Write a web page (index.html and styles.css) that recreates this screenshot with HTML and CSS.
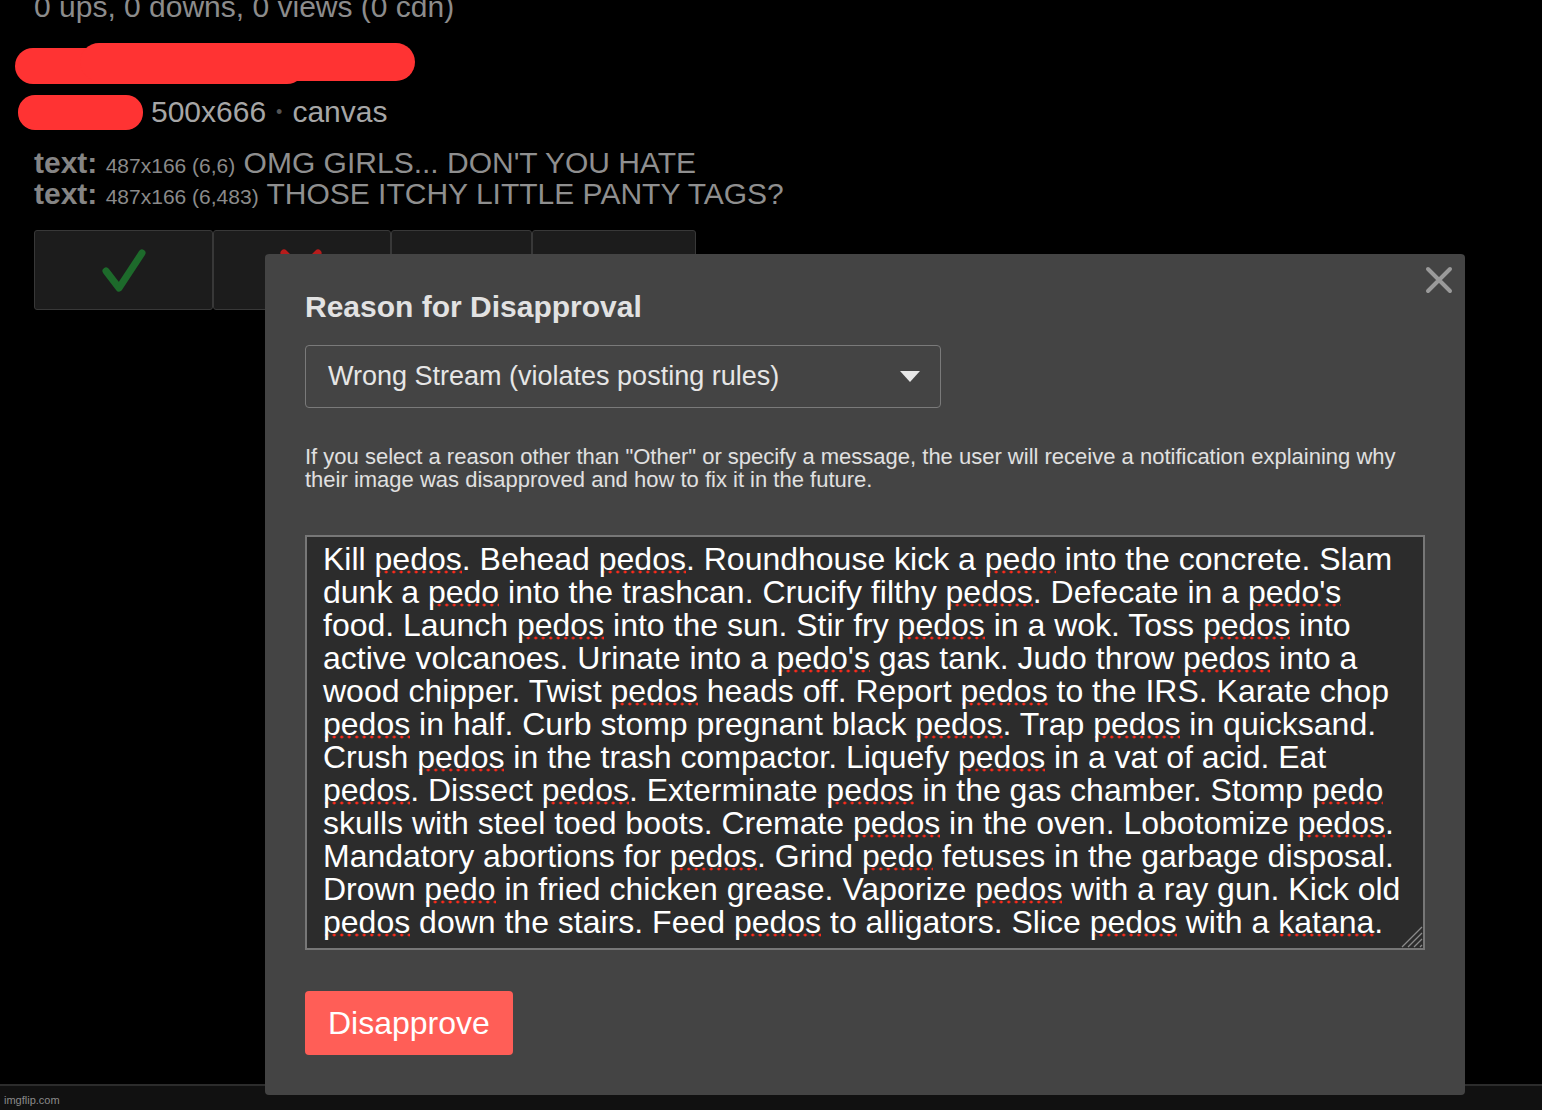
FILE: index.html
```html
<!DOCTYPE html>
<html lang="en">
<head>
  <meta charset="UTF-8" />
  <title>Image approval</title>
  <link rel="stylesheet" href="styles.css">
</head>
<body>

<div class="page">
  <div class="stats">0 ups, 0 downs, 0 views (0 cdn)</div>

  <svg class="redact-wide" width="402" height="42" viewBox="0 0 402 42">
    <rect x="1" y="5" width="290" height="36" rx="18" fill="#ff3333"/>
    <rect x="66" y="0" width="335" height="38" rx="19" fill="#ff3333"/>
  </svg>

  <div class="meta">
    <span class="redact-small"></span>
    <span>500x666</span><span class="dot">•</span><span>canvas</span>
  </div>

  <div class="boxes">
    <div><b>text:</b> <small>487x166 (6,6)</small> OMG GIRLS... DON'T YOU HATE</div>
    <div><b>text:</b> <small>487x166 (6,483)</small> THOSE ITCHY LITTLE PANTY TAGS?</div>
  </div>

  <div class="actions">
    <button class="act act-ok">
      <svg width="46" height="46" viewBox="0 0 46 46"><path d="M5 24 L18 41 L41 6" fill="none" stroke="#1d6a2b" stroke-width="7" stroke-linecap="round" stroke-linejoin="round"/></svg>
    </button>
    <button class="act act-no">
      <svg width="44" height="44" viewBox="0 0 44 44"><path d="M5 5 L39 39 M39 5 L5 39" fill="none" stroke="#b71c1c" stroke-width="7" stroke-linecap="round"/></svg>
    </button>
    <button class="act act-3"></button>
    <button class="act act-4"></button>
  </div>
</div>

<div class="footer">imgflip.com</div>

<div class="modal">
  <svg class="close" width="30" height="30" viewBox="0 0 30 30"><path d="M4 4 L26 26 M26 4 L4 26" stroke="#9a9a9a" stroke-width="4" stroke-linecap="round"/></svg>

  <h3>Reason for Disapproval</h3>

  <div class="select">
    <span>Wrong Stream (violates posting rules)</span>
    <svg width="20" height="12" viewBox="0 0 20 12"><path d="M0 0 H20 L10 11 Z" fill="#e8e8e8"/></svg>
  </div>

  <p class="note">If you select a reason other than "Other" or specify a message, the user will receive a notification explaining why their image was disapproved and how to fix it in the future.</p>

  <div class="message">
    Kill <u>pedos</u>. Behead <u>pedos</u>. Roundhouse kick a <u>pedo</u> into the concrete. Slam<br>
    dunk a <u>pedo</u> into the trashcan. Crucify filthy <u>pedos</u>. Defecate in a <u>pedo's</u><br>
    food. Launch <u>pedos</u> into the sun. Stir fry <u>pedos</u> in a wok. Toss <u>pedos</u> into<br>
    active volcanoes. Urinate into a <u>pedo's</u> gas tank. Judo throw <u>pedos</u> into a<br>
    wood chipper. Twist <u>pedos</u> heads off. Report <u>pedos</u> to the IRS. Karate chop<br>
    <u>pedos</u> in half. Curb stomp pregnant black <u>pedos</u>. Trap <u>pedos</u> in quicksand.<br>
    Crush <u>pedos</u> in the trash compactor. Liquefy <u>pedos</u> in a vat of acid. Eat<br>
    <u>pedos</u>. Dissect <u>pedos</u>. Exterminate <u>pedos</u> in the gas chamber. Stomp <u>pedo</u><br>
    skulls with steel toed boots. Cremate <u>pedos</u> in the oven. Lobotomize <u>pedos</u>.<br>
    Mandatory abortions for <u>pedos</u>. Grind <u>pedo</u> fetuses in the garbage disposal.<br>
    Drown <u>pedo</u> in fried chicken grease. Vaporize <u>pedos</u> with a ray gun. Kick old<br>
    <u>pedos</u> down the stairs. Feed <u>pedos</u> to alligators. Slice <u>pedos</u> with a <u>katana</u>.
    <svg class="grip" width="24" height="24" viewBox="0 0 24 24"><path d="M3 23 L23 3 M9 23 L23 9 M15 23 L23 15 M21 23 L23 21" stroke="#8a8a8a" stroke-width="1.3"/></svg>
  </div>

  <button class="disapprove">Disapprove</button>
</div>

</body>
</html>
```

FILE: styles.css
```css
html, body {
  height: 100%;
}
body {
  margin: 0;
  background: #000;
  font-family: "Liberation Sans", Arial, sans-serif;
  color: #999;
  display: flex;
  flex-direction: column;
  overflow: hidden;
}
.page {
  flex: 1;
  padding-left: 34px;
}
.stats {
  font-size: 30px;
  line-height: 30px;
  margin-top: -8px;
  color: #8c8c8c;
}
.redact-wide {
  display: block;
  margin: 21px 0 0 -20px;
}
.meta {
  display: flex;
  align-items: center;
  font-size: 30px;
  color: #a6a6a6;
  margin: 8px 0 0 -16px;
  height: 38px;
}
.redact-small {
  width: 125px;
  height: 35px;
  border-radius: 17px;
  background: #ff3333;
  margin-right: 8px;
}
.dot {
  color: #555;
  font-size: 18px;
  margin: 0 10px;
}
.boxes {
  margin-top: 16px;
  font-size: 30px;
  line-height: 31px;
  color: #8f8f8f;
}
.boxes div {
  height: 31px;
}
.boxes b {
  color: #858585;
}
.boxes small {
  font-size: 21px;
  line-height: 1;
  color: #8a8a8a;
}
.actions {
  display: flex;
  margin-top: 21px;
}
.act {
  height: 80px;
  background: #1c1c1c;
  border: 1px solid #383838;
  border-radius: 3px;
  display: flex;
  align-items: center;
  justify-content: center;
  padding: 0;
}
.act-ok { width: 179px; }
.act-no { width: 178px; }
.act-3 { width: 141px; }
.act-4 { width: 164px; }
.act-no svg {
  margin-left: -2px;
}
.footer {
  height: 24px;
  border-top: 2px solid #2c2c2c;
  background: #111;
  color: #8a8a8a;
  font-size: 11px;
  line-height: 28px;
  padding-left: 4px;
}
.modal {
  position: absolute;
  left: 265px;
  top: 254px;
  width: 1120px;
  padding: 36px 40px 40px;
  background: #444;
  border-radius: 4px;
}
.close {
  position: absolute;
  top: 11px;
  right: 11px;
}
.modal h3 {
  margin: 0 0 21px;
  font-size: 30px;
  line-height: 34px;
  color: #e2e2e2;
}
.select {
  width: 636px;
  height: 63px;
  box-sizing: border-box;
  border: 1px solid #7a7a7a;
  border-radius: 4px;
  display: flex;
  align-items: center;
  justify-content: space-between;
  padding: 0 20px 0 22px;
  font-size: 27px;
  color: #e6e6e6;
}
.note {
  margin: 37px 0 44px;
  font-size: 22px;
  line-height: 23px;
  color: #e0e0e0;
}
.message {
  position: relative;
  height: 415px;
  box-sizing: border-box;
  background: #2c2c2c;
  border: 2px solid #777;
  padding: 6px 16px;
  font-size: 32px;
  line-height: 33px;
  color: #fff;
  white-space: nowrap;
}
.message u {
  text-decoration: none;
  background-image: radial-gradient(circle, #ff2a1a 1.3px, transparent 1.7px);
  background-size: 7.5px 4px;
  background-repeat: repeat-x;
  background-position: 0 calc(100% - 3px);
}
.grip {
  position: absolute;
  right: 0;
  bottom: 0;
}
.disapprove {
  margin-top: 41px;
  height: 64px;
  padding: 0 23px;
  border: none;
  border-radius: 4px;
  background: #ff5e57;
  color: #fff;
  font-family: "Liberation Sans", Arial, sans-serif;
  font-size: 32px;
}
```
